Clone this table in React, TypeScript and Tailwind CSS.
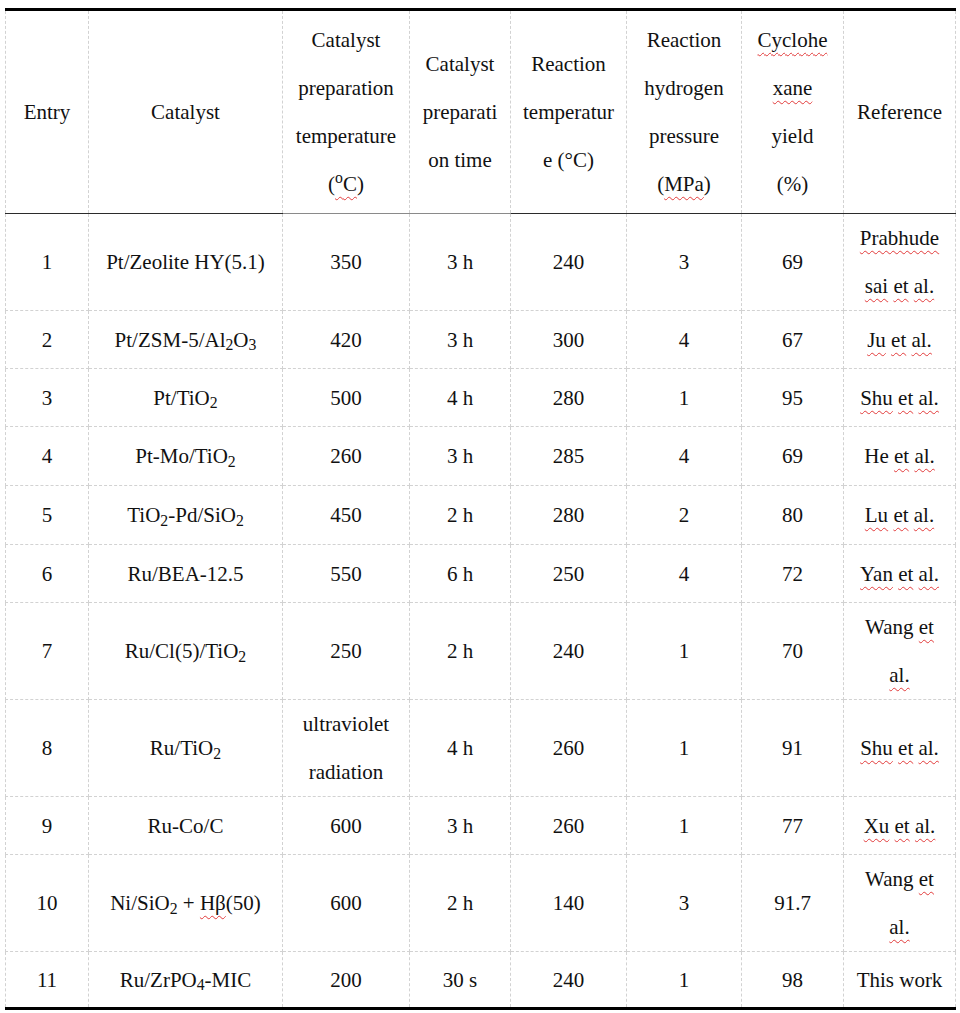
import React from "react";

// red wavy spell-check underline, like Word draws it
const Sq = ({ children }: { children: React.ReactNode }) => (
  <span className="underline decoration-wavy decoration-[#e23b3b] decoration-1 underline-offset-[5px]">
    {children}
  </span>
);

const widths = [83, 194, 127, 101, 116, 115, 102, 112];

// bottom rule under the header changes tone across the columns
const headBottom = [
  "border-b-[#2b2b2b]",
  "border-b-[#2b2b2b]",
  "border-b-[#8a8a8a]",
  "border-b-[#8a8a8a]",
  "border-b-[#2b2b2b]",
  "border-b-[#2b2b2b]",
  "border-b-[#2b2b2b]",
  "border-b-[#2b2b2b]",
];

const head: React.ReactNode[] = [
  "Entry",
  "Catalyst",
  <>
    Catalyst
    <br />
    preparation
    <br />
    temperature
    <br />(
    <Sq>
      <sup>o</sup>C
    </Sq>
    )
  </>,
  <>
    Catalyst
    <br />
    preparati
    <br />
    on time
  </>,
  <>
    Reaction
    <br />
    temperatur
    <br />e (°C)
  </>,
  <>
    Reaction
    <br />
    hydrogen
    <br />
    pressure
    <br />(<Sq>MPa</Sq>)
  </>,
  <>
    <Sq>Cyclohe</Sq>
    <br />
    <Sq>xane</Sq>
    <br />
    yield
    <br />
    (%)
  </>,
  "Reference",
];

const rows: { h: string; cells: React.ReactNode[] }[] = [
  {
    h: "h-[97px]",
    cells: [
      "1",
      "Pt/Zeolite HY(5.1)",
      "350",
      "3 h",
      "240",
      "3",
      "69",
      <>
        <Sq>Prabhude</Sq>
        <br />
        <Sq>sai</Sq> <Sq>et</Sq> <Sq>al.</Sq>
      </>,
    ],
  },
  {
    h: "h-[58px]",
    cells: [
      "2",
      <>
        Pt/ZSM-5/Al<sub>2</sub>O<sub>3</sub>
      </>,
      "420",
      "3 h",
      "300",
      "4",
      "67",
      <>
        <Sq>Ju</Sq> <Sq>et</Sq> <Sq>al.</Sq>
      </>,
    ],
  },
  {
    h: "h-[58px]",
    cells: [
      "3",
      <>
        Pt/TiO<sub>2</sub>
      </>,
      "500",
      "4 h",
      "280",
      "1",
      "95",
      <>
        <Sq>Shu</Sq> <Sq>et</Sq> <Sq>al.</Sq>
      </>,
    ],
  },
  {
    h: "h-[59px]",
    cells: [
      "4",
      <>
        Pt-Mo/TiO<sub>2</sub>
      </>,
      "260",
      "3 h",
      "285",
      "4",
      "69",
      <>
        He <Sq>et</Sq> <Sq>al.</Sq>
      </>,
    ],
  },
  {
    h: "h-[59px]",
    cells: [
      "5",
      <>
        TiO<sub>2</sub>-Pd/SiO<sub>2</sub>
      </>,
      "450",
      "2 h",
      "280",
      "2",
      "80",
      <>
        <Sq>Lu</Sq> <Sq>et</Sq> <Sq>al.</Sq>
      </>,
    ],
  },
  {
    h: "h-[58px]",
    cells: [
      "6",
      "Ru/BEA-12.5",
      "550",
      "6 h",
      "250",
      "4",
      "72",
      <>
        <Sq>Yan</Sq> <Sq>et</Sq> <Sq>al.</Sq>
      </>,
    ],
  },
  {
    h: "h-[96px]",
    cells: [
      "7",
      <>
        Ru/Cl(5)/TiO<sub>2</sub>
      </>,
      "250",
      "2 h",
      "240",
      "1",
      "70",
      <>
        Wang <Sq>et</Sq>
        <br />
        <Sq>al.</Sq>
      </>,
    ],
  },
  {
    h: "h-[96px]",
    cells: [
      "8",
      <>
        Ru/TiO<sub>2</sub>
      </>,
      <>
        ultraviolet
        <br />
        radiation
      </>,
      "4 h",
      "260",
      "1",
      "91",
      <>
        <Sq>Shu</Sq> <Sq>et</Sq> <Sq>al.</Sq>
      </>,
    ],
  },
  {
    h: "h-[58px]",
    cells: [
      "9",
      "Ru-Co/C",
      "600",
      "3 h",
      "260",
      "1",
      "77",
      <>
        <Sq>Xu</Sq> <Sq>et</Sq> <Sq>al.</Sq>
      </>,
    ],
  },
  {
    h: "h-[96px]",
    cells: [
      "10",
      <>
        Ni/SiO<sub>2</sub> + <Sq>Hβ</Sq>(50)
      </>,
      "600",
      "2 h",
      "140",
      "3",
      "91.7",
      <>
        Wang <Sq>et</Sq>
        <br />
        <Sq>al.</Sq>
      </>,
    ],
  },
  {
    h: "h-[57px]",
    cells: ["11", <>Ru/ZrPO<sub>4</sub>-MIC</>, "200", "30 s", "240", "1", "98", "This work"],
  },
];

export default function App() {
  return (
    <div className="min-h-screen bg-white pl-[5px] pt-[8px] font-['Liberation_Serif','Times_New_Roman',serif] text-[21px] leading-[48px] text-[#111]">
      <table className="w-[950px] table-fixed border-collapse text-center">
        <colgroup>
          {widths.map((w, i) => (
            <col key={i} style={{ width: w }} />
          ))}
        </colgroup>
        <thead>
          <tr>
            {head.map((h, i) => (
              <th
                key={i}
                className={`h-[204px] border border-dashed border-[#d2d2d2] border-t-[3px] border-t-black [border-top-style:solid] border-b [border-bottom-style:solid] ${headBottom[i]} p-0 align-middle font-normal`}
              >
                {h}
              </th>
            ))}
          </tr>
        </thead>
        <tbody>
          {rows.map((r, ri) => {
            const isLast = ri === rows.length - 1;
            return (
              <tr key={ri}>
                {r.cells.map((c, ci) => (
                  <td
                    key={ci}
                    className={
                      isLast
                        ? `${r.h} border border-dashed border-[#d2d2d2] border-b-[3px] border-b-black [border-bottom-style:solid] p-0 align-middle`
                        : `${r.h} border border-dashed border-[#d2d2d2] p-0 align-middle`
                    }
                  >
                    {c}
                  </td>
                ))}
              </tr>
            );
          })}
        </tbody>
      </table>
    </div>
  );
}
